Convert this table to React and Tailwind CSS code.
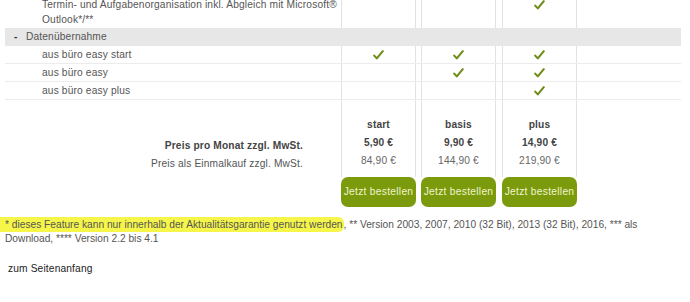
import React from "react";

const Check = () => (
  <svg width="11" height="10" viewBox="0 0 11 10" className="block">
    <path
      d="M1.2 5.6 L3.8 8.4 L9.8 1.2"
      fill="none"
      stroke="#6f8c16"
      strokeWidth="2.1"
      strokeLinecap="round"
      strokeLinejoin="round"
    />
  </svg>
);

const plans = [
  { name: "start", month: "5,90 €", once: "84,90 €" },
  { name: "basis", month: "9,90 €", once: "144,90 €" },
  { name: "plus", month: "14,90 €", once: "219,90 €" },
];

const colWidths = ["w-[75px]", "w-[75px] ml-[5px]", "w-[75px] ml-[6px]"];

const Cells = ({ checks, top }) => (
  <>
    {checks.map((c, i) => (
      <div
        key={i}
        className={`${colWidths[i]} shrink-0 border-x border-[#e2e2e2] flex justify-center ${
          top ? "items-start" : "items-center"
        }`}
      >
        {c && <Check />}
      </div>
    ))}
    <div className="flex-1" />
  </>
);

const subRows = [
  { label: "aus büro easy start", checks: [true, true, true] },
  { label: "aus büro easy", checks: [false, true, true] },
  { label: "aus büro easy plus", checks: [false, false, true] },
];

export default function App() {
  return (
    <div
      className="w-[690px] h-[302px] overflow-hidden bg-white text-[10.2px] text-[#555] tracking-[0.15px]"
      style={{ fontFamily: "'Liberation Sans', Arial, sans-serif" }}
    >
      <div className="ml-[5px] w-[676px]">
        {/* Outlook row */}
        <div className="flex h-[28px]">
          <div className="w-[336px] shrink-0 pl-[37px] pr-[2px] leading-[14.5px] mt-[-2px]">
            Termin- und Aufgabenorganisation inkl. Abgleich mit Microsoft®
            Outlook*/**
          </div>
          <Cells checks={[false, false, true]} top />
        </div>

        {/* Datenübernahme header */}
        <div className="flex items-center h-[18px] bg-[#e7e7e7]">
          <span className="ml-[9px] w-[12px] font-bold text-[#333]">-</span>
          <span>Datenübernahme</span>
        </div>

        {subRows.map((r) => (
          <div key={r.label} className="flex h-[18px] border-b border-[#ececec]">
            <div className="w-[336px] shrink-0 pl-[37px] flex items-center">
              {r.label}
            </div>
            <Cells checks={r.checks} />
          </div>
        ))}

        {/* Prices */}
        <div className="flex">
          <div className="w-[336px] shrink-0 pt-[37px] pr-[38px] flex flex-col items-end leading-[18px]">
            <span className="font-bold text-[#444]">Preis pro Monat zzgl. MwSt.</span>
            <span>Preis als Einmalkauf zzgl. MwSt.</span>
          </div>
          {plans.map((p, i) => (
            <div key={p.name} className={`${colWidths[i]} shrink-0 flex flex-col`}>
              <div className="h-[77px] border-x border-[#e2e2e2] pt-[16px] flex flex-col items-center leading-[18px]">
                <span className="font-bold text-[#444]">{p.name}</span>
                <span className="font-bold text-[#444]">{p.month}</span>
                <span className="text-[#666]">{p.once}</span>
              </div>
              <button className="h-[30px] w-full rounded-[7px] bg-[#7b9a0c] text-[#f1f6cf] text-[10.2px] tracking-[0.3px]">
                Jetzt bestellen
              </button>
            </div>
          ))}
        </div>

        {/* Footnote */}
        <p className="mt-[11px] leading-[14px] pr-[20px] tracking-[0px]">
          <span className="bg-[#f6f64a] py-[2px] pl-[5px] ml-[-5px] pr-[1px] rounded-r-[6px] text-[#555]">
            * dieses Feature kann nur innerhalb der Aktualitätsgarantie genutzt werden
          </span>
          , ** Version 2003, 2007, 2010 (32 Bit), 2013 (32 Bit), 2016, *** als
          Download, **** Version 2.2 bis 4.1
        </p>

        <p className="mt-[16px] ml-[3px] leading-[14px] text-[#222]">zum Seitenanfang</p>
      </div>
    </div>
  );
}
